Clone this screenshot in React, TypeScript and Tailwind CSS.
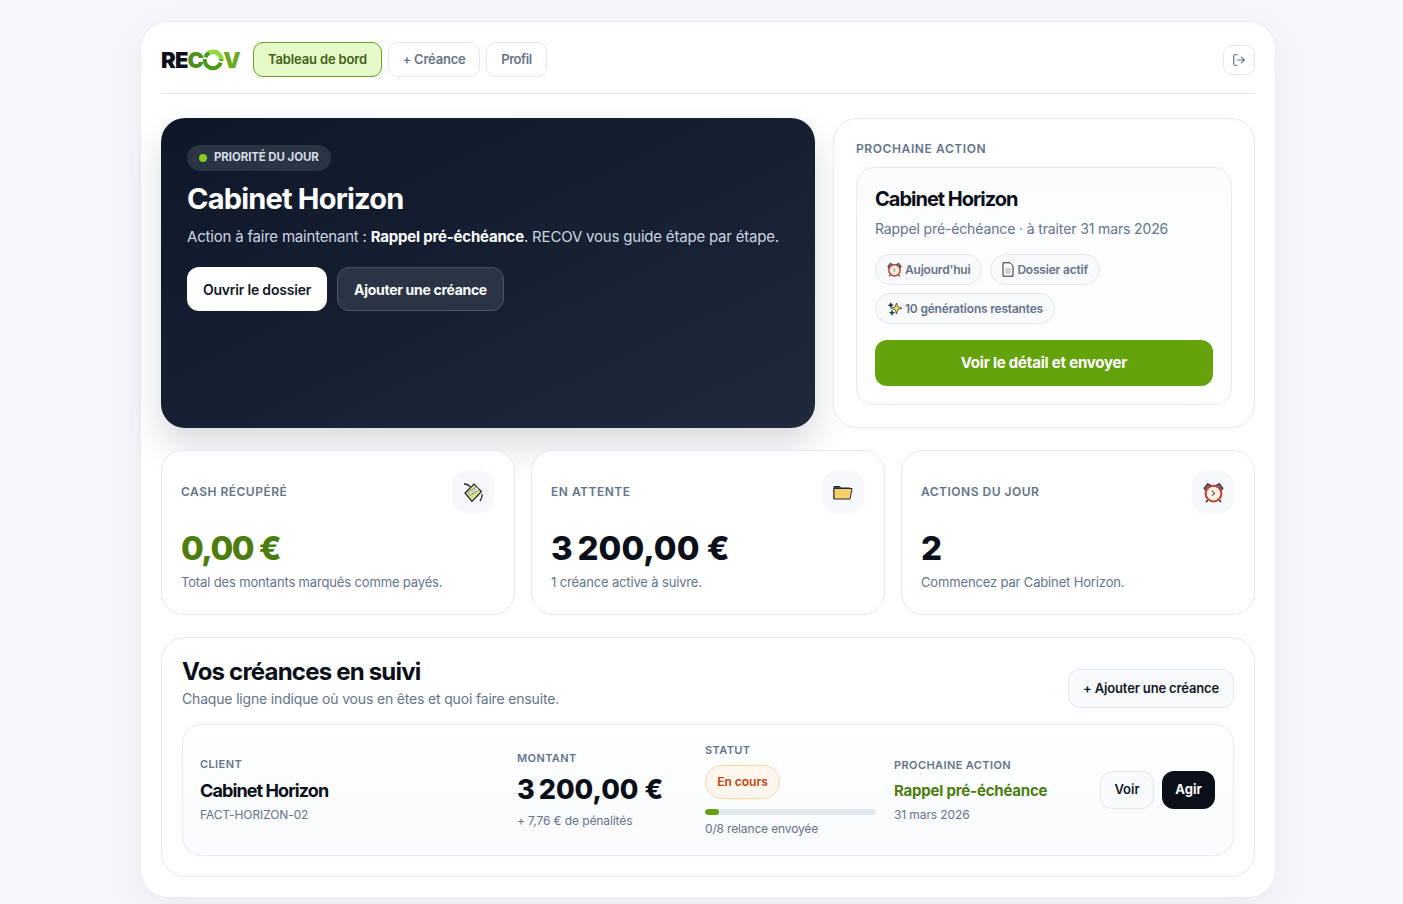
import { LogOut } from 'lucide-react';

const sans = { fontFamily: 'Inter, "Liberation Sans", sans-serif' };

function AlarmIcon({ size = 21 }: { size?: number }) {
  return (
    <svg width={size} height={size} viewBox="0 0 20 20">
      <path d="M1 6 4.500 1.500l3.500 2-5 5z" fill="#6b7280" stroke="#1f2937" strokeWidth="1" />
      <path d="M19 6 15.500 1.500l-3.500 2 5 5z" fill="#6b7280" stroke="#1f2937" strokeWidth="1" />
      <path d="M4.500 17 3 19M15.500 17l1.500 2" stroke="#1f2937" strokeWidth="1.500" />
      <circle cx="10" cy="11" r="7.500" fill="#fff1e6" stroke="#c8402f" strokeWidth="2" />
      <path d="M8.500 8l2.500 3-2.500 2" fill="none" stroke="#555" strokeWidth="1" />
    </svg>
  );
}

function FolderIcon() {
  return (
    <svg width="20" height="20" viewBox="0 0 20 20">
      <path d="M1 17V4.500h5.500L8 6h9v3H3z" fill="#3b4a6b" stroke="#1f2937" strokeWidth="1" />
      <path d="M1 17V6.500h18L17 17z" fill="#fbd068" stroke="#1f2937" strokeWidth="1" />
    </svg>
  );
}

function MoneyIcon() {
  return (
    <svg width="20" height="20" viewBox="0 0 20 20">
      <path d="M1 2c2 0 5 1 6 3M17 19c1.500-2 2.500-4 2-7" fill="none" stroke="#1f2937" strokeWidth="1.300" />
      <path d="M2 11 11 2l7.500 7.500L9 19.500z" fill="#d6e48a" stroke="#1f2937" strokeWidth="1.200" />
      <path d="m5 10 9-5 2 3-9 5.500z" fill="#f5f8dc" stroke="#6b7280" strokeWidth="0.700" />
      <path d="m7.500 10.500 5-3M8.500 12l5-3" stroke="#6b7280" strokeWidth="0.600" />
    </svg>
  );
}

function DocIcon() {
  return (
    <svg width="12" height="15" viewBox="0 0 12 15">
      <path d="M1 .800h7l3 3v10.400H1z" fill="#fff" stroke="#1f2937" strokeWidth="1" />
      <path d="M3 7h6M3 9h6M3 11h6" stroke="#9ca3af" strokeWidth="1" />
    </svg>
  );
}

function SparkIcon() {
  return (
    <svg width="15" height="15" viewBox="0 0 15 15">
      <path d="m9.500 2 1.300 3.900L15 7.300l-4.200 1.300L9.500 13 8.200 8.600 4 7.300l4.200-1.400z" fill="#fde047" stroke="#1f2937" strokeWidth="0.700" />
      <path d="m3.800 1 1 2.300 2.200.9-2.200.9-1 2.300-1-2.300L.600 4.200l2.200-.9z" fill="#1e293b" />
      <path d="m5 8.500 1 2.200 2.200 1-2.200 1-1 2.300-1-2.300-2.200-1 2.200-1z" fill="#14532d" />
    </svg>
  );
}

function Logo() {
  return (
    <div className="flex items-center text-[22px] font-black leading-none tracking-[-0.8px]">
      <span className="text-[#0b0f19]">RE</span>
      <span className="text-[#4f8f16]">C</span>
      <svg width="24" height="24" viewBox="0 0 24 24" className="-mx-[1px]">
        <circle cx="12" cy="12" r="9" fill="none" stroke="#4e9a14" strokeWidth="4.500" strokeDasharray="26 2 26 2.500" transform="rotate(20 12 12)" />
        <circle cx="12" cy="12" r="9" fill="none" stroke="#8fdc3c" strokeWidth="4.500" strokeDasharray="18 40" transform="rotate(-120 12 12)" />
      </svg>
      <span className="text-[#6aaa1c]">V</span>
    </div>
  );
}

function StatCard({ label, value, sub, icon, valueClass }: { label: string; value: string; sub: string; icon: React.ReactNode; valueClass: string }) {
  return (
    <div className="h-[165px] rounded-[22px] border border-[#e6eaf0] bg-white pl-[19px] pr-5 pt-5">
      <div className="flex items-center justify-between">
        <span className="text-[12px] font-semibold tracking-[0.5px] text-[#64748b]">{label}</span>
        <span className="flex h-[42px] w-[42px] items-center justify-center rounded-[14px] bg-[#f6f8fb]">{icon}</span>
      </div>
      <div className={`mt-[13px] font-extrabold leading-[44px] ${valueClass}`}>{value}</div>
      <div className="mt-[3px] text-[13px] tracking-[-0.15px] text-[#64748b]">{sub}</div>
    </div>
  );
}

function Chip({ icon, label }: { icon: React.ReactNode; label: string }) {
  return (
    <span className="flex h-[31px] items-center gap-[3px] rounded-full border border-[#e2e8f0] bg-[#f8fafc] px-[11px] text-[12px] font-semibold tracking-[-0.2px] text-[#64748b]">
      {icon}
      {label}
    </span>
  );
}

export default function App() {
  return (
    <div style={sans} className="min-h-[904px] bg-[#f5f7fc] pl-[140px] pt-[21px]">
      <div className="h-[877px] w-[1136px] rounded-[28px] border border-[#e9edf3] bg-white px-5 pt-5 shadow-[0_12px_40px_rgba(15,23,42,0.05)]">
        <header className="flex h-[52px] items-start justify-between border-b border-[#e5e9ef]">
          <div className="flex items-center">
            <div className="mr-[13px] w-[79px]">
              <Logo />
            </div>
            <div className="flex gap-[6px]">
              <span className="flex h-[35px] w-[129px] items-center justify-center rounded-[10px] border border-[#6a9e22] bg-[#e6f9c9] text-[13px] font-semibold tracking-[-0.15px] text-[#3f6212]">Tableau de bord</span>
              <span className="flex h-[35px] w-[92px] items-center justify-center rounded-[10px] border border-[#e5e9ef] bg-white text-[13px] font-semibold tracking-[-0.2px] text-[#64748b]">+ Créance</span>
              <span className="flex h-[35px] w-[61px] items-center justify-center rounded-[10px] border border-[#e5e9ef] bg-white text-[13px] font-semibold tracking-[-0.4px] text-[#64748b]">Profil</span>
            </div>
          </div>
          <button className="flex h-[30px] w-[32px] translate-y-[3px] items-center justify-center rounded-[9px] border border-[#e5e9ef] text-[#64748b]">
            <LogOut size={14} className="-scale-x-100 rotate-180" />
          </button>
        </header>

        <div className="mt-6 grid grid-cols-[654px_422px] gap-[18px]">
          <section className="h-[310px] rounded-[24px] bg-gradient-to-br from-[#0f172a] to-[#1e293b] px-[26px] pt-[26px] shadow-[0_18px_36px_rgba(15,23,42,0.16)]">
            <span className="inline-flex h-[26px] items-center gap-[7px] rounded-full bg-[#2a3444] px-3 text-[11.500px] font-bold tracking-[-0.1px] text-[#d5dbe5]">
              <span className="h-2 w-2 rounded-full bg-[#84cc16]" />
              PRIORITÉ DU JOUR
            </span>
            <h1 className="mt-[10px] text-[29px] font-bold leading-[36px] tracking-[-0.8px] text-white">Cabinet Horizon</h1>
            <p className="mt-[9px] text-[15px] leading-[22px] tracking-[-0.2px] text-[#cbd5e1]">
              Action à faire maintenant : <strong className="font-bold text-white">Rappel pré-échéance</strong>. RECOV vous guide étape par étape.
            </p>
            <div className="mt-[19px] flex gap-[10px]">
              <span className="flex h-[44px] w-[140px] items-center justify-center rounded-[12px] bg-white text-[14px] font-semibold tracking-[-0.2px] text-[#111827]">Ouvrir le dossier</span>
              <span className="flex h-[44px] w-[167px] items-center justify-center rounded-[12px] border border-[#475569] bg-[#2a3444] text-[14px] font-bold tracking-[-0.3px] text-white">Ajouter une créance</span>
            </div>
          </section>

          <aside className="h-[310px] rounded-[24px] border border-[#e6eaf0] bg-white px-[22px] pt-[22px]">
            <div className="text-[12px] font-semibold leading-4 tracking-[0.6px] text-[#64748b]">PROCHAINE ACTION</div>
            <div className="mt-[10px] h-[238px] rounded-[18px] border border-[#e6eaf0] bg-gradient-to-b from-[#fbfcfe] to-white px-[18px] pt-[18px]">
              <h2 className="text-[20px] font-bold leading-[26px] tracking-[-1px] text-[#0b0f19]">Cabinet Horizon</h2>
              <p className="mt-[7px] text-[14px] leading-[20px] tracking-[-0.13px] text-[#64748b]">Rappel pré-échéance · à traiter 31 mars 2026</p>
              <div className="mt-[15px] flex flex-wrap gap-x-2 gap-y-[8px]">
                <Chip icon={<AlarmIcon size={15} />} label="Aujourd'hui" />
                <Chip icon={<DocIcon />} label="Dossier actif" />
                <Chip icon={<SparkIcon />} label="10 générations restantes" />
              </div>
              <div className="mt-[16px] flex h-[46px] items-center justify-center rounded-[12px] bg-[#65a30d] text-[15px] font-bold tracking-[-0.2px] text-white">Voir le détail et envoyer</div>
            </div>
          </aside>
        </div>

        <div className="mt-[22px] grid grid-cols-3 gap-4">
          <StatCard label="CASH RÉCUPÉRÉ" value="0,00 €" sub="Total des montants marqués comme payés." icon={<MoneyIcon />} valueClass="text-[33px] tracking-[-1.5px] text-[#4d7c0f]" />
          <StatCard label="EN ATTENTE" value={'3\u202f200,00 €'} sub="1 créance active à suivre." icon={<FolderIcon />} valueClass="text-[33px] tracking-[-0.2px] text-[#0b0f19]" />
          <StatCard label="ACTIONS DU JOUR" value="2" sub="Commencez par Cabinet Horizon." icon={<AlarmIcon />} valueClass="text-[33px] text-[#0b0f19]" />
        </div>

        <section className="mt-[22px] h-[240px] rounded-[24px] border border-[#e6eaf0] bg-white px-5 pt-5">
          <div className="flex items-start justify-between">
            <div>
              <h2 className="text-[24px] font-bold leading-[28px] tracking-[-0.8px] text-[#0b0f19]">Vos créances en suivi</h2>
              <p className="mt-[3px] text-[14px] leading-[20px] tracking-[-0.17px] text-[#64748b]">Chaque ligne indique où vous en êtes et quoi faire ensuite.</p>
            </div>
            <span className="mt-[11px] flex h-[39px] w-[166px] items-center justify-center rounded-[12px] border border-[#e2e8f0] bg-[#f8fafc] text-[13px] font-semibold tracking-[-0.15px] text-[#111827]">+ Ajouter une créance</span>
          </div>
          <div className="mt-[15px] flex h-[132px] items-center rounded-[20px] border border-[#e6eaf0] bg-gradient-to-b from-white to-[#f8fafd] px-[17px]">
            <div className="w-[317px]">
              <div className="text-[11px] font-semibold tracking-[0.4px] text-[#64748b]">CLIENT</div>
              <div className="mt-[7px] text-[18px] font-bold leading-6 tracking-[-0.9px] text-[#0b0f19]">Cabinet Horizon</div>
              <div className="mt-[3px] text-[12px] tracking-[-0.1px] text-[#64748b]">FACT-HORIZON-02</div>
            </div>
            <div className="w-[188px]">
              <div className="text-[11px] font-semibold tracking-[0.4px] text-[#64748b]">MONTANT</div>
              <div className="mt-[8px] text-[27px] font-extrabold leading-[32px] text-[#0b0f19]">{'3\u202f200,00 €'}</div>
              <div className="mt-[6px] text-[12px] tracking-[-0.1px] text-[#64748b]">+ 7,76 € de pénalités</div>
            </div>
            <div className="mr-[18px] w-[171px]">
              <div className="text-[11px] font-semibold tracking-[0.4px] text-[#64748b]">STATUT</div>
              <span className="mt-[7px] flex h-[34px] w-[75px] items-center justify-center rounded-full border border-[#fed7aa] bg-[#fff7ed] text-[12px] font-semibold text-[#c2410c]">En cours</span>
              <div className="mt-[10px] h-[6px] overflow-hidden rounded-full bg-[#e2e8f0]">
                <div className="h-full w-[14px] rounded-full bg-[#65a30d]" />
              </div>
              <div className="mt-[5px] text-[12px] tracking-[-0.15px] text-[#64748b]">0/8 relance envoyée</div>
            </div>
            <div className="w-[206px]">
              <div className="translate-y-[1px] text-[11px] font-semibold tracking-[0.4px] text-[#64748b]">PROCHAINE ACTION</div>
              <div className="mt-[7px] text-[15px] font-bold leading-[22px] tracking-[-0.2px] text-[#4d7c0f]">Rappel pré-échéance</div>
              <div className="mt-[4px] text-[12px] tracking-[-0.1px] text-[#64748b]">31 mars 2026</div>
            </div>
            <div className="flex gap-2">
              <span className="flex h-[38px] w-[54px] items-center justify-center rounded-[12px] border border-[#e2e8f0] bg-[#f8fafc] text-[13px] font-semibold text-[#111827]">Voir</span>
              <span className="flex h-[38px] w-[53px] items-center justify-center rounded-[12px] bg-[#0b0f19] text-[13px] font-bold text-white">Agir</span>
            </div>
          </div>
        </section>
      </div>
    </div>
  );
}
